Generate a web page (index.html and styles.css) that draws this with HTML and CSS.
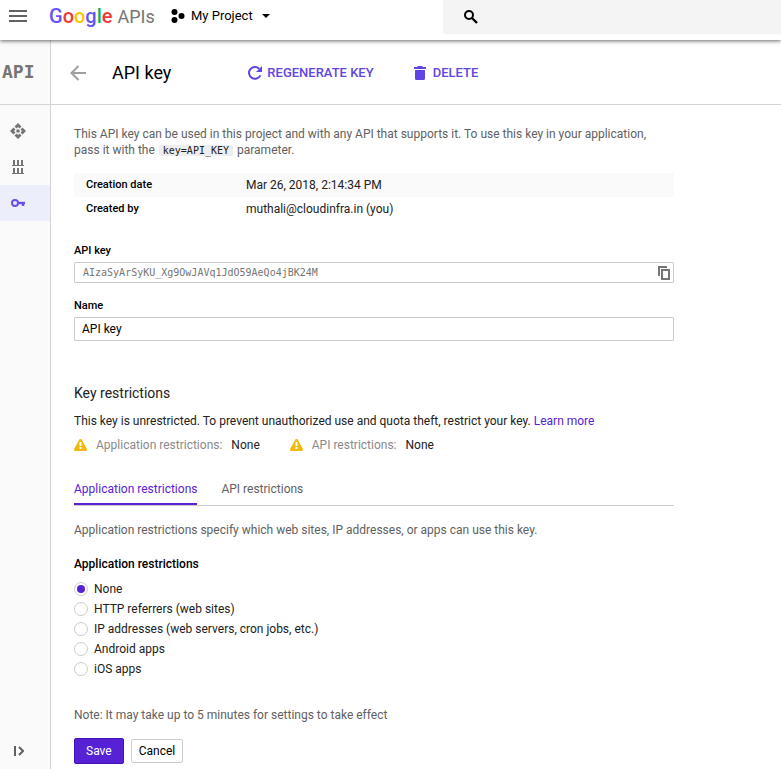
FILE: index.html
```html
<!DOCTYPE html>
<html lang="en">
<head>
    <meta charset="UTF-8">
    <meta name="viewport" content="width=device-width, initial-scale=1.0">
    <title>API key - Google APIs</title>
    <link rel="stylesheet" href="styles.css">
</head>
<body>
    <header class="topbar">
        <button class="icon-button menu-button" type="button" aria-label="Main menu">
            <svg width="18" height="12" viewBox="0 0 18 12" fill="#616161"><path d="M0 0h18v2H0zM0 5h18v2H0zM0 10h18v2H0z"/></svg>
        </button>
        <a href="#" class="brand"><span class="blue">G</span><span class="red">o</span><span class="yellow">o</span><span class="blue">g</span><span class="green">l</span><span class="red">e</span> <span class="brand-apis">APIs</span></a>
        <button class="project-picker" type="button">
            <svg width="14" height="14" viewBox="0 0 14 14"><circle cx="3.5" cy="3" r="3"/><circle cx="3.5" cy="11" r="3"/><circle cx="10.5" cy="7" r="3"/></svg>
            <span>My Project</span>
            <svg class="caret" width="8" height="4" viewBox="0 0 8 4"><path d="M0 0h8L4 4z"/></svg>
        </button>
        <div class="search">
            <svg width="14" height="14" viewBox="0 0 14 14" fill="none" stroke="#000" stroke-width="2"><circle cx="5" cy="5" r="4"/><path d="M8 8l5 5" stroke-width="2.4"/></svg>
            <input type="search" class="search-input" aria-label="Search">
        </div>
    </header>

    <div class="layout">
        <nav class="sidebar">
            <a href="#" class="api-logo">API</a>
            <a href="#" class="nav-item" aria-label="Dashboard">
                <svg width="16" height="16" viewBox="0 0 16 16" fill="#757575"><path d="M8 0l3.500 3.500L9.500 5.500 8 4 6.500 5.500l-2-2zM8 16l-3.500-3.500 2-2L8 12l1.500-1.500 2 2zM0 8l3.500-3.500 2 2L4 8l1.500 1.500-2 2zM16 8l-3.500 3.500-2-2L12 8l-1.500-1.500 2-2z"/><circle cx="8" cy="8" r="1.800"/></svg>
            </a>
            <a href="#" class="nav-item library" aria-label="Library">
                <svg width="12" height="14" viewBox="0 0 12 14" fill="#757575"><path d="M1 0h2v5h2V0h2v5h2V0h2v5h1v1H0V5h1zM1 8h2v5h2V8h2v5h2V8h2v5h1v1H0v-1h1z"/></svg>
            </a>
            <a href="#" class="nav-item active" aria-label="Credentials">
                <svg width="15" height="8" viewBox="0 0 15 8" fill="none" stroke="#6a4fe8" stroke-width="2"><circle cx="4" cy="4" r="3"/><path d="M7 4h7" stroke-width="2.400"/><path d="M12 4v3" stroke-width="2.400"/></svg>
            </a>
            <button class="icon-button expand-button" type="button" aria-label="Show menu">
                <svg width="10" height="10" viewBox="0 0 10 10" fill="none" stroke="#616161" stroke-width="2"><path d="M1 0v10M5 1l4 4-4 4"/></svg>
            </button>
        </nav>

        <main class="main">
            <div class="page-header">
                <a href="#" class="back" aria-label="Back">
                    <svg width="16" height="16" viewBox="0 0 16 16" fill="none" stroke="#9e9e9e" stroke-width="2"><path d="M16 8H2M8.500 1L1.500 8l7 7"/></svg>
                </a>
                <h1>API key</h1>
                <button class="action regenerate" type="button">
                    <svg width="14" height="14" viewBox="0 0 14 14"><path d="M12.300 9.400A5.900 5.900 0 1 1 11.200 2.800" fill="none" stroke="#6045e2" stroke-width="2"/><path d="M14 0v6H8z" fill="#6045e2"/></svg>
                    REGENERATE KEY
                </button>
                <button class="action" type="button">
                    <svg width="12" height="14" viewBox="0 0 12 14" fill="#6045e2"><path d="M0 1h3l1-1h4l1 1h3v2H0zM1 4h10v8.500Q11 14 9.500 14h-7Q1 14 1 12.500z"/></svg>
                    DELETE
                </button>
            </div>

            <form class="content">
                <p class="intro">This API key can be used in this project and with any API that supports it. To use this key in your application, pass it with the <code>key=API_KEY</code> parameter.</p>

                <table class="details">
                    <tr>
                        <th scope="row">Creation date</th>
                        <td>Mar 26, 2018, 2:14:34 PM</td>
                    </tr>
                    <tr>
                        <th scope="row">Created by</th>
                        <td>muthali@cloudinfra.in (you)</td>
                    </tr>
                </table>

                <label class="field-label" for="apiKey">API key</label>
                <div class="key-box">
                    <input type="text" id="apiKey" value="AIzaSyArSyKU_Xg9OwJAVq1JdO59AeQo4jBK24M" readonly>
                    <button class="icon-button" type="button" aria-label="Copy">
                        <svg width="12" height="14" viewBox="0 0 12 14" fill="none" stroke="#757575" stroke-width="2"><path d="M1 10V1h8M4 4h7v9H4z"/></svg>
                    </button>
                </div>

                <label class="field-label" for="keyName">Name</label>
                <input class="name-input" type="text" id="keyName" value="API key">

                <h2>Key restrictions</h2>
                <p class="summary">This key is unrestricted. To prevent unauthorized use and quota theft, restrict your key. <a href="#">Learn more</a></p>
                <div class="status-list">
                    <div class="status">
                        <svg width="13" height="12" viewBox="0 0 13 12"><path d="M6.500 1.500L11.500 10.500h-10z" fill="#f2b90c" stroke="#f2b90c" stroke-width="3" stroke-linejoin="round"/><path d="M5.500 3h2v4h-2zM5.500 8h2v2h-2z" fill="#fff"/></svg>
                        <span class="status-name">Application restrictions:</span>
                        <span>None</span>
                    </div>
                    <div class="status">
                        <svg width="13" height="12" viewBox="0 0 13 12"><path d="M6.500 1.500L11.500 10.500h-10z" fill="#f2b90c" stroke="#f2b90c" stroke-width="3" stroke-linejoin="round"/><path d="M5.500 3h2v4h-2zM5.500 8h2v2h-2z" fill="#fff"/></svg>
                        <span class="status-name">API restrictions:</span>
                        <span>None</span>
                    </div>
                </div>

                <div class="tabs" role="tablist">
                    <button class="tab selected" type="button" role="tab" aria-selected="true">Application restrictions</button>
                    <button class="tab" type="button" role="tab" aria-selected="false">API restrictions</button>
                </div>

                <p class="hint">Application restrictions specify which web sites, IP addresses, or apps can use this key.</p>

                <fieldset class="options">
                    <legend>Application restrictions</legend>
                    <label><input type="radio" name="restriction" checked>None</label>
                    <label><input type="radio" name="restriction">HTTP referrers (web sites)</label>
                    <label><input type="radio" name="restriction">IP addresses (web servers, cron jobs, etc.)</label>
                    <label><input type="radio" name="restriction">Android apps</label>
                    <label><input type="radio" name="restriction">iOS apps</label>
                </fieldset>

                <p class="note">Note: It may take up to 5 minutes for settings to take effect</p>
                <div class="buttons">
                    <button class="save" type="button">Save</button>
                    <button class="cancel" type="button">Cancel</button>
                </div>
            </form>
        </main>
    </div>
</body>
</html>
```
FILE: styles.css
```css
* {
    box-sizing: border-box;
}
body {
    display: flex;
    flex-direction: column;
    min-height: 100vh;
    margin: 0;
    font-family: Roboto, Arial, sans-serif;
    font-size: 12px;
    line-height: 16px;
    color: #212121;
    background-color: #fff;
}
h1, h2, p {
    margin: 0;
}
a {
    color: #5722d6;
    text-decoration: none;
}
button, input {
    font-family: inherit;
    font-size: inherit;
    line-height: inherit;
}
svg {
    display: block;
    flex: none;
}
.icon-button {
    padding: 0;
    border: none;
    background: none;
    cursor: pointer;
}

/* top bar */
.topbar {
    display: flex;
    position: relative;
    height: 40px;
    background-color: #fff;
    box-shadow: 0 1px 4px rgba(0, 0, 0, 0.6);
}
.menu-button {
    padding: 0 9px;
    height: 32px;
}
.brand {
    width: 107px;
    margin-left: 13px;
    font-size: 20px;
    font-weight: 500;
    line-height: 32px;
    white-space: nowrap;
}
.blue { color: #6554f5; }
.red { color: #f03a35; }
.yellow { color: #fbc500; }
.green { color: #12b359; }
.brand-apis {
    color: #757575;
    font-size: 18px;
    font-weight: 400;
}
.project-picker {
    display: flex;
    align-items: center;
    gap: 6px;
    height: 32px;
    margin-left: 15px;
    padding: 0;
    border: none;
    background: none;
    color: #000;
    font-size: 13px;
    white-space: nowrap;
    cursor: pointer;
}
.caret {
    margin-left: 3px;
}
.search {
    display: flex;
    align-items: center;
    gap: 12px;
    width: 338px;
    height: 34px;
    margin-left: auto;
    padding-left: 21px;
    background-color: #f4f4f4;
    border-bottom-left-radius: 2px;
}
.search-input {
    flex: 1;
    min-width: 0;
    border: none;
    outline: none;
    background: none;
}

/* sidebar */
.layout {
    display: flex;
    flex: 1;
}
.sidebar {
    display: flex;
    flex-direction: column;
    width: 51px;
    background-color: #fafafa;
    border-right: 1px solid #d5d5d5;
}
.api-logo {
    height: 65px;
    margin-bottom: 8px;
    padding-left: 2px;
    border-bottom: 1px solid #d5d5d5;
    color: #757575;
    font-family: "DejaVu Sans Mono", monospace;
    font-size: 18px;
    font-weight: bold;
    line-height: 64px;
}
.nav-item {
    display: flex;
    align-items: center;
    height: 36px;
    padding-left: 10px;
}
.library {
    padding-left: 12px;
}
.active {
    padding-left: 11px;
    background-color: #eceffb;
}
.expand-button {
    margin-top: auto;
    padding: 13px 14px;
}

/* page header */
.main {
    flex: 1;
    min-width: 0;
}
.page-header {
    display: flex;
    align-items: center;
    height: 65px;
    padding: 1px 0 0 19px;
    border-bottom: 1px solid #d5d5d5;
}
h1 {
    margin-left: 26px;
    color: #000;
    font-size: 18px;
    font-weight: 400;
    line-height: 24px;
}
.action {
    display: flex;
    align-items: center;
    gap: 7px;
    margin-left: 40px;
    padding: 0;
    border: none;
    background: none;
    color: #6045e2;
    font-size: 13px;
    font-weight: 500;
    cursor: pointer;
}
.regenerate {
    margin-left: 77px;
    gap: 5px;
}

/* form */
.content {
    max-width: 646px;
    padding: 21px 23px 5px;
}
.intro, .hint, .note {
    color: #616161;
}
code {
    margin: 0 1px;
    padding: 0 4px;
    border-radius: 2px;
    background-color: #eee;
    color: #212121;
    font-family: "DejaVu Sans Mono", monospace;
    font-size: 10px;
}
.details {
    width: 100%;
    margin: 14px 0 22px;
    border-collapse: collapse;
}
.details th {
    width: 160px;
    padding: 4px 12px;
    color: #000;
    font-size: 11px;
    font-weight: 500;
    text-align: left;
}
.details td {
    padding: 4px 12px;
}
.details tr:first-child {
    background-color: #fafafa;
}
.field-label {
    display: block;
    margin-bottom: 3px;
    color: #000;
    font-size: 11px;
    font-weight: 500;
}
.key-box {
    display: flex;
    align-items: center;
    height: 21px;
    margin-bottom: 15px;
    padding: 0 3px 0 8px;
    border: 1px solid #ccc;
    border-radius: 1px;
}
.key-box input {
    flex: 1;
    min-width: 0;
    padding: 0;
    border: none;
    outline: none;
    color: #757575;
    font-family: "DejaVu Sans Mono", monospace;
    font-size: 10px;
}
.name-input {
    display: block;
    width: 100%;
    height: 24px;
    padding: 0 7px;
    border: 1px solid #ccc;
    border-radius: 1px;
    color: #000;
}
h2 {
    margin: 42px 0 10px;
    font-size: 14px;
    font-weight: 400;
    line-height: 20px;
}
.status-list {
    display: flex;
    gap: 30px;
    margin-top: 8px;
}
.status {
    display: flex;
    align-items: center;
    gap: 9px;
}
.status-name {
    color: #8a8a8a;
}
.tabs {
    display: flex;
    gap: 24px;
    margin-top: 22px;
    border-bottom: 1px solid #ccc;
}
.tab {
    padding: 6px 0 6px;
    border: none;
    border-bottom: 2px solid transparent;
    background: none;
    color: #616161;
    cursor: pointer;
}
.selected {
    border-bottom-color: #5722d6;
    color: #5722d6;
}
.hint {
    margin: 16px 0 18px;
}
.options {
    margin: 0;
    padding: 0;
    border: none;
}
legend {
    margin-bottom: 7px;
    padding: 0;
    color: #000;
    font-weight: 500;
}
.options label {
    display: flex;
    align-items: center;
    gap: 6px;
    height: 20px;
}
.options input {
    display: grid;
    place-items: center;
    width: 14px;
    height: 14px;
    margin: 0;
    appearance: none;
    border: 1px solid #ccc;
    border-radius: 50%;
    background-color: #fff;
}
.options input:checked::before {
    content: "";
    width: 8px;
    height: 8px;
    border-radius: 50%;
    background-color: #5722d6;
}
.note {
    margin: 28px 0 15px;
}
.buttons {
    display: flex;
    align-items: center;
    gap: 7px;
}
.save, .cancel {
    height: 24px;
    padding: 0 7px;
    border: 1px solid #ccc;
    border-radius: 2px;
    background-color: #fff;
    color: #000;
    cursor: pointer;
}
.save {
    height: 26px;
    padding: 0 11px;
    border-color: #4312b8;
    background-color: #5722d6;
    color: #fff;
}
```
